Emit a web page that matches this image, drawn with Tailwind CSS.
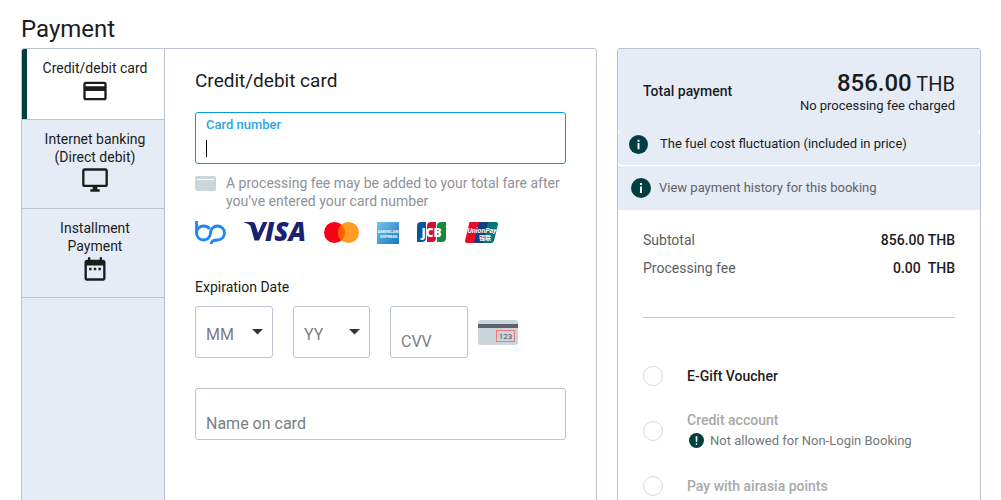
<!DOCTYPE html>
<html lang="en">
<head>
    <meta charset="UTF-8">
    <meta name="viewport" content="width=device-width, initial-scale=1.0">
    <title>Payment</title>
    <!-- Tailwind CSS CDN -->
    <script src="https://cdn.jsdelivr.net/npm/@tailwindcss/browser@4"></script>
</head>
<body class="bg-white font-['Roboto','Liberation_Sans',sans-serif] text-sm text-[#1c1c1c]">

    <main class="pt-3 px-5">
        <h1 class="text-2xl leading-[34px] pb-[2px] pl-px">Payment</h1>

        <div class="grid grid-cols-[minmax(0,1fr)_364px] gap-5 pl-px">

            <!-- Payment methods -->
            <section class="flex min-h-[560px] border border-[#bcc3d0] rounded-[3px] overflow-hidden">
                <nav class="w-[143px] shrink-0 bg-[#e5ecf6] border-r border-[#bcc3d0] text-center leading-[18px]">
                    <button type="button" class="relative flex flex-col items-center w-full pt-[10px] pb-[14px] px-1 pl-2 bg-white border-b border-[#bcc3d0]">
                        <span class="absolute left-0 top-0 bottom-0 w-[5px] bg-[#003e40]"></span>
                        <span>Credit/debit card</span>
                        <svg class="size-7" viewBox="0 0 24 24" fill="currentColor"><path d="M20 4H4c-1.11 0-1.99.89-1.99 2L2 18c0 1.11.89 2 2 2h16c1.11 0 2-.89 2-2V6c0-1.11-.89-2-2-2zm0 14H4v-6h16v6zm0-10H4V6h16v2z"/></svg>
                    </button>
                    <button type="button" class="flex flex-col items-center w-full pt-[10px] pb-[14px] px-1 pl-2 border-b border-[#bcc3d0]">
                        <span>Internet banking<br>(Direct debit)</span>
                        <svg class="size-7" viewBox="0 0 24 24" fill="currentColor"><path d="M21 2H3c-1.1 0-2 .9-2 2v12c0 1.1.9 2 2 2h7v2H8v2h8v-2h-2v-2h7c1.1 0 2-.9 2-2V4c0-1.1-.9-2-2-2zm0 14H3V4h18v12z"/></svg>
                    </button>
                    <button type="button" class="flex flex-col items-center w-full pt-[10px] pb-[14px] px-1 pl-2 border-b border-[#bcc3d0]">
                        <span>Installment<br>Payment</span>
                        <svg class="size-7" viewBox="0 0 24 24" fill="currentColor"><path d="M9 11H7v2h2v-2zm4 0h-2v2h2v-2zm4 0h-2v2h2v-2zm2-7h-1V2h-2v2H8V2H6v2H5c-1.11 0-1.99.9-1.99 2L3 20c0 1.1.89 2 2 2h14c1.1 0 2-.9 2-2V6c0-1.1-.9-2-2-2zm0 16H5V9h14v11z"/></svg>
                    </button>
                </nav>

                <form class="flex-1 min-w-0 px-[30px] pt-[18px] pb-8">
                    <h2 class="text-[19px] leading-7">Credit/debit card</h2>

                    <div class="relative mt-[17px]">
                        <label for="cardNumber" class="absolute left-[11px] top-1 text-[13px] leading-[18px] font-medium text-[#2ba6e4]">Card number</label>
                        <input type="text" id="cardNumber" class="block w-full h-[52px] pt-5 px-[11px] text-base border border-[#0a9ae0] rounded-[3px] outline-none caret-transparent">
                        <span class="absolute left-[11px] top-7 w-px h-[17px] bg-black"></span>
                    </div>

                    <div class="flex gap-[10px] mt-[10px] leading-[18px] text-[#8f9296]">
                        <svg class="w-[21px] h-[15px] mt-[2px] shrink-0" viewBox="0 0 21 15"><rect width="21" height="15" rx="2" fill="#cbd5dc"/><rect x="2" y="3" width="17" height="1" fill="#fff"/></svg>
                        <p>A processing fee may be added to your total fare after<br>you’ve entered your card number</p>
                    </div>

                    <!-- Accepted cards -->
                    <svg class="block mt-[10px] w-[304px] h-6 overflow-visible" viewBox="0 0 304 24" font-family="Roboto, 'Liberation Sans', sans-serif">
                        <g fill="none" stroke="#1e88fa" stroke-width="2.8">
                            <path d="M1.500 1v12a7 7 0 0 0 14 0a7 7 0 0 1 14 0a7 7 0 0 1-7 7q-6 0-6.500 4"/>
                            <path d="M1.500 13a7 7 0 0 1 7-7q4.500 0 6 3"/>
                        </g>
                        <path d="M49 2h8c2 0 3 1 3.500 3l2.500 8 5-11h4.500l-8.500 18.500h-4.500L55.500 6c-1.500-2-4-3-6.500-3.500z" fill="#1a2170"/>
                        <text x="70" y="20.500" font-size="26" font-weight="900" font-style="italic" fill="#1a2170" font-family="'Open Sans', sans-serif">ISA</text>
                        <circle cx="139.500" cy="12.500" r="10.500" fill="#f90016"/>
                        <circle cx="153.500" cy="12.500" r="10.500" fill="#ff9b22"/>
                        <path d="M146.500 4.700a10.500 10.500 0 0 1 0 15.600a10.500 10.500 0 0 1 0-15.600z" fill="#ff6200"/>
                        <defs>
                            <linearGradient id="amex" x1="0" y1="0" x2="1" y2="1"><stop offset="0" stop-color="#7cc3ea"/><stop offset="1" stop-color="#1478be"/></linearGradient>
                        </defs>
                        <rect x="182" y="2" width="22" height="22" fill="url(#amex)"/>
                        <g fill="#e6f4fc" font-size="4" font-weight="900" text-anchor="middle">
                            <text x="193" y="12.500">AMERICAN</text>
                            <text x="194" y="17.500">EXPRESS</text>
                        </g>
                        <path d="M226 2h5v16q0 4-4 4h-5V6q0-4 4-4z" fill="#0b54a0"/>
                        <path d="M236 2h5v16q0 4-4 4h-5V6q0-4 4-4z" fill="#d40f34"/>
                        <path d="M246 2h5v16q0 4-4 4h-5V6q0-4 4-4z" fill="#168a38"/>
                        <text x="236.500" y="16.500" font-size="12" font-weight="900" fill="#fff" text-anchor="middle" font-family="'Open Sans', sans-serif">JCB</text>
                        <path d="M275 2h12l-5 21h-10q-2 0-2-2l4-17q0-2 1-2z" fill="#e60d22"/>
                        <path d="M284 2h10l-5 21h-10z" fill="#143c80"/>
                        <path d="M293 2h8q2 0 2 2l-4 17q-1 2-3 2h-8z" fill="#04747c"/>
                        <text x="287" y="13" font-size="7" font-weight="700" font-style="italic" fill="#fff" text-anchor="middle">UnionPay</text>
                        <text x="290" y="20" font-size="6" font-weight="700" fill="#fff" text-anchor="middle" font-family="'Noto Sans CJK SC', sans-serif">银联</text>
                    </svg>

                    <!-- Expiry date and CVV -->
                    <p class="mt-[34px] leading-[18px]">Expiration Date</p>
                    <div class="flex items-center mt-[10px]">
                        <div class="relative w-[78px]">
                            <select aria-label="Month" class="appearance-none block w-full h-[52px] pt-[6px] pl-[10px] text-base text-[#7b7d80] bg-white border border-[#bcc3d0] rounded-[3px]">
                                <option>MM</option>
                            </select>
                            <svg class="absolute right-[10px] top-[23px] w-[11px] h-[6px]" viewBox="0 0 11 6"><path d="M0 0h11L5.500 5.500z" fill="#333"/></svg>
                        </div>
                        <div class="relative w-[77px] ml-5">
                            <select aria-label="Year" class="appearance-none block w-full h-[52px] pt-[6px] pl-[10px] text-base text-[#7b7d80] bg-white border border-[#bcc3d0] rounded-[3px]">
                                <option>YY</option>
                            </select>
                            <svg class="absolute right-[10px] top-[23px] w-[11px] h-[6px]" viewBox="0 0 11 6"><path d="M0 0h11L5.500 5.500z" fill="#333"/></svg>
                        </div>
                        <input type="text" aria-label="CVV" placeholder="CVV" class="w-[78px] h-[52px] ml-5 pt-[18px] px-[10px] text-base placeholder-[#7b7d80] border border-[#bcc3d0] rounded-[3px]">
                        <svg class="ml-[10px] w-10 h-[25px]" viewBox="0 0 40 25"><rect width="40" height="25" rx="3" fill="#cbd5dc"/><rect y="4" width="40" height="4" fill="#5c646c"/><rect x="18.500" y="10.500" width="18" height="11" fill="none" stroke="#f4777a"/><text x="27.500" y="19" font-size="8" text-anchor="middle" fill="#4a4f55">123</text></svg>
                    </div>

                    <input type="text" aria-label="Name on card" placeholder="Name on card" class="block w-full h-[52px] mt-[30px] pt-[18px] px-[10px] text-base placeholder-[#7b7d80] border border-[#bcc3d0] rounded-[3px]">
                </form>
            </section>

            <!-- Summary -->
            <aside class="border border-[#bcc3d0] rounded-[3px] overflow-hidden">
                <div class="flex items-center justify-between h-[83px] px-[25px] bg-[#e5ecf6] rounded-b">
                    <h2 class="font-medium">Total payment</h2>
                    <div class="text-right pt-[2px]">
                        <p class="text-xl leading-7"><b class="text-2xl leading-7 font-medium">856.00</b> THB</p>
                        <p class="text-[13px] leading-4">No processing fee charged</p>
                    </div>
                </div>
                <div class="flex items-center gap-3 h-[33px] px-[11px] pb-2 bg-[#e5ecf6] rounded text-[13px]">
                    <svg class="size-[19px]" viewBox="0 0 20 20"><circle cx="10" cy="10" r="10" fill="#003e40"/><path d="M9 5h2v2H9zM9 8.500h2V15H9z" fill="#fff"/></svg>
                    <p>The fuel cost fluctuation (included in price)</p>
                </div>
                <div class="flex items-center gap-2 h-11 mt-px px-[13px] bg-[#e5ecf6] text-[13px] text-[#606366]">
                    <svg class="size-5" viewBox="0 0 20 20"><circle cx="10" cy="10" r="10" fill="#003e40"/><path d="M9 5h2v2H9zM9 8.500h2V15H9z" fill="#fff"/></svg>
                    <a href="#">View payment history for this booking</a>
                </div>

                <div class="px-[25px] pt-4">
                    <dl class="grid grid-cols-2 leading-7 pb-[35px] border-b border-[#c8c8c8]">
                        <dt class="text-[#5c5f62]">Subtotal</dt>
                        <dd class="text-right font-medium">856.00 THB</dd>
                        <dt class="text-[#5c5f62]">Processing fee</dt>
                        <dd class="text-right font-medium">0.00 &nbsp;THB</dd>
                    </dl>

                    <div class="pt-[30px]">
                        <div class="flex items-center gap-6 h-[55px]">
                            <input type="radio" name="other" id="voucher" class="appearance-none size-5 border border-[#dadadd] rounded-full">
                            <label for="voucher" class="font-medium">E-Gift Voucher</label>
                        </div>
                        <div class="flex items-center gap-6 h-[55px]">
                            <input type="radio" name="other" id="account" disabled class="appearance-none size-5 border border-[#dadadd] rounded-full">
                            <div class="pb-1">
                                <label for="account" class="block font-medium leading-6 text-[#a9a9a9]">Credit account</label>
                                <p class="flex items-center gap-[6px] text-[13px] leading-[18px] text-[#75777a]">
                                    <svg class="size-[15px] ml-[2px]" viewBox="0 0 16 16"><circle cx="8" cy="8" r="8" fill="#003e40"/><path d="M7 3.500h2L8.700 9.500H7.300zM7.200 10.800h1.600v1.700H7.200z" fill="#fff"/></svg>
                                    Not allowed for Non-Login Booking
                                </p>
                            </div>
                        </div>
                        <div class="flex items-center gap-6 h-[55px]">
                            <input type="radio" name="other" id="points" disabled class="appearance-none size-5 border border-[#dadadd] rounded-full">
                            <label for="points" class="font-medium text-[#a9a9a9]">Pay with airasia points</label>
                        </div>
                    </div>
                </div>
            </aside>
        </div>
    </main>

</body>
</html>
